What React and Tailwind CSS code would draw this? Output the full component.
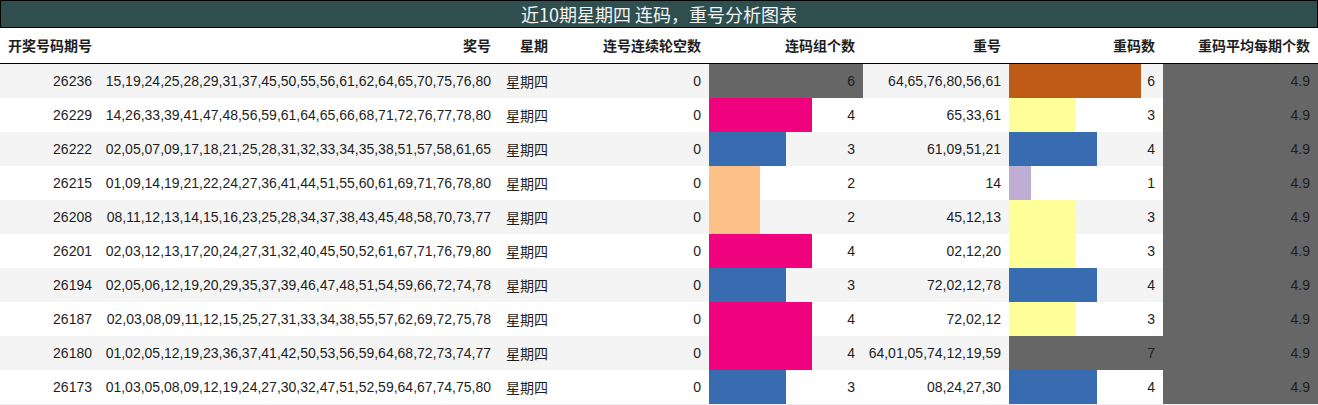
import React from "react";

const rows = [
  ["26236", "15,19,24,25,28,29,31,37,45,50,55,56,61,62,64,65,70,75,76,80", 6, "64,65,76,80,56,61", 6],
  ["26229", "14,26,33,39,41,47,48,56,59,61,64,65,66,68,71,72,76,77,78,80", 4, "65,33,61", 3],
  ["26222", "02,05,07,09,17,18,21,25,28,31,32,33,34,35,38,51,57,58,61,65", 3, "61,09,51,21", 4],
  ["26215", "01,09,14,19,21,22,24,27,36,41,44,51,55,60,61,69,71,76,78,80", 2, "14", 1],
  ["26208", "08,11,12,13,14,15,16,23,25,28,34,37,38,43,45,48,58,70,73,77", 2, "45,12,13", 3],
  ["26201", "02,03,12,13,17,20,24,27,31,32,40,45,50,52,61,67,71,76,79,80", 4, "02,12,20", 3],
  ["26194", "02,05,06,12,19,20,29,35,37,39,46,47,48,51,54,59,66,72,74,78", 3, "72,02,12,78", 4],
  ["26187", "02,03,08,09,11,12,15,25,27,31,33,34,38,55,57,62,69,72,75,78", 4, "72,02,12", 3],
  ["26180", "01,02,05,12,19,23,36,37,41,42,50,53,56,59,64,68,72,73,74,77", 4, "64,01,05,74,12,19,59", 7],
  ["26173", "01,03,05,08,09,12,19,24,27,30,32,47,51,52,59,64,67,74,75,80", 3, "08,24,27,30", 4],
];

const c5 = { 2: "#fdc086", 3: "#386cb0", 4: "#f0027f", 6: "#666666" };
const c7 = { 1: "#beaed4", 3: "#ffff99", 4: "#386cb0", 6: "#bf5b17", 7: "#666666" };

const grid = "grid grid-cols-[100px_399px_57px_153px_154px_146px_154px_155px]";

function bar(color, w) {
  return { background: `linear-gradient(to right, ${color} ${w}px, transparent ${w}px)` };
}

export default function App() {
  return (
    <div className="w-[1318px] bg-white text-[#1e1e1e]" style={{ fontFamily: '"Liberation Sans", "Noto Sans CJK SC", sans-serif' }}>
      <div className="h-[28px] border border-black bg-[#2f4f4f] flex items-center justify-center text-[18px] text-[#f4f4f4] leading-none" style={{ fontFamily: '"Noto Sans CJK SC", sans-serif' }}>
        近10期星期四 连码，重号分析图表
      </div>
      <div className={`${grid} h-[36px] border-b border-black items-center text-[14px] font-bold`} style={{ fontFamily: '"Noto Sans CJK SC", sans-serif' }}>
        <div className="pl-2 whitespace-nowrap">开奖号码期号</div>
        <div className="pr-2 text-right">奖号</div>
        <div className="pr-2 text-right">星期</div>
        <div className="pr-2 text-right">连号连续轮空数</div>
        <div className="pr-2 text-right">连码组个数</div>
        <div className="pr-2 text-right">重号</div>
        <div className="pr-2 text-right">重码数</div>
        <div className="pr-2 text-right">重码平均每期个数</div>
      </div>
      <div className="border-b border-[#eeeeee]">
        {rows.map((r, i) => (
          <div key={r[0]} className={`${grid} h-[34px] items-stretch text-[14px] ${i % 2 === 0 ? "bg-[#f4f4f4]" : "bg-white"}`}>
            <div className="pr-2 flex items-center justify-end">{r[0]}</div>
            <div className="pr-2 flex items-center justify-end whitespace-nowrap">{r[1]}</div>
            <div className="pr-2 flex items-center justify-end" style={{ fontFamily: '"Noto Sans CJK SC", sans-serif' }}>星期四</div>
            <div className="pr-2 flex items-center justify-end">0</div>
            <div className="pr-2 flex items-center justify-end" style={bar(c5[r[2]], Math.round((r[2] / 6) * 154))}>{r[2]}</div>
            <div className="pr-2 flex items-center justify-end whitespace-nowrap">{r[3]}</div>
            <div className="pr-2 flex items-center justify-end" style={bar(c7[r[4]], Math.round((r[4] / 7) * 154))}>{r[4]}</div>
            <div className="pr-2 flex items-center justify-end bg-[#666666]">4.9</div>
          </div>
        ))}
      </div>
    </div>
  );
}
